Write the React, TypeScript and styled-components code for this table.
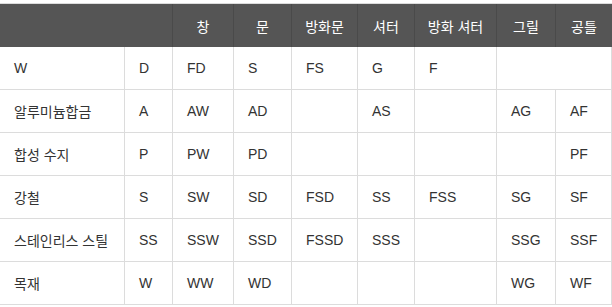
import styled, { createGlobalStyle } from "styled-components";

const GlobalStyle = createGlobalStyle`
  html, body {
    margin: 0;
    padding: 0;
    background: #fff;
  }
  body {
    font-family: "Liberation Sans", Arial, "Noto Sans CJK KR", sans-serif;
    color: #333;
  }
`;

const Wrapper = styled.div`
  padding-top: 3px;
  width: 612px;
`;

const Table = styled.table`
  width: 612px;
  table-layout: fixed;
  border-collapse: separate;
  border-spacing: 0;
  border-top: 1px solid #dcdcdc;
  font-size: 14px;
`;

const HeadCell = styled.th<{ $divider?: boolean }>`
  height: 43px;
  padding: 0;
  background: #555555;
  color: #fff;
  font-weight: normal;
  text-align: center;
  border-right: ${(p) => (p.$divider ? "1px solid #4a4a4a" : "none")};
`;

const Cell = styled.td`
  height: 42px;
  padding: 0 0 0 14px;
  text-align: left;
  white-space: nowrap;
  border-bottom: 1px solid #dcdcdc;
  border-right: 1px solid #dcdcdc;
`;

const widths = [125, 48, 61, 58, 66, 57, 82, 59, 56];
const heads = ["창", "문", "방화문", "셔터", "방화 셔터", "그릴", "공틀"];

// a row with fewer than 9 values lets its last cell span the rest
const rows: string[][] = [
  ["W", "D", "FD", "S", "FS", "G", "F", ""],
  ["알루미늄합금", "A", "AW", "AD", "", "AS", "", "AG", "AF"],
  ["합성 수지", "P", "PW", "PD", "", "", "", "", "PF"],
  ["강철", "S", "SW", "SD", "FSD", "SS", "FSS", "SG", "SF"],
  ["스테인리스 스틸", "SS", "SSW", "SSD", "FSSD", "SSS", "", "SSG", "SSF"],
  ["목재", "W", "WW", "WD", "", "", "", "WG", "WF"],
];

export default function App() {
  return (
    <>
      <GlobalStyle />
      <Wrapper>
        <Table>
          <colgroup>
            {widths.map((w, i) => (
              <col key={i} style={{ width: w }} />
            ))}
          </colgroup>
          <thead>
            <tr>
              <HeadCell colSpan={2} $divider />
              {heads.map((h, i) => (
                <HeadCell key={h} $divider={i < heads.length - 1}>
                  {h}
                </HeadCell>
              ))}
            </tr>
          </thead>
          <tbody>
            {rows.map((r, i) => (
              <tr key={i}>
                {r.map((c, j) => (
                  <Cell
                    key={j}
                    colSpan={j === r.length - 1 ? 9 - j : undefined}
                  >
                    {c}
                  </Cell>
                ))}
              </tr>
            ))}
          </tbody>
        </Table>
      </Wrapper>
    </>
  );
}
